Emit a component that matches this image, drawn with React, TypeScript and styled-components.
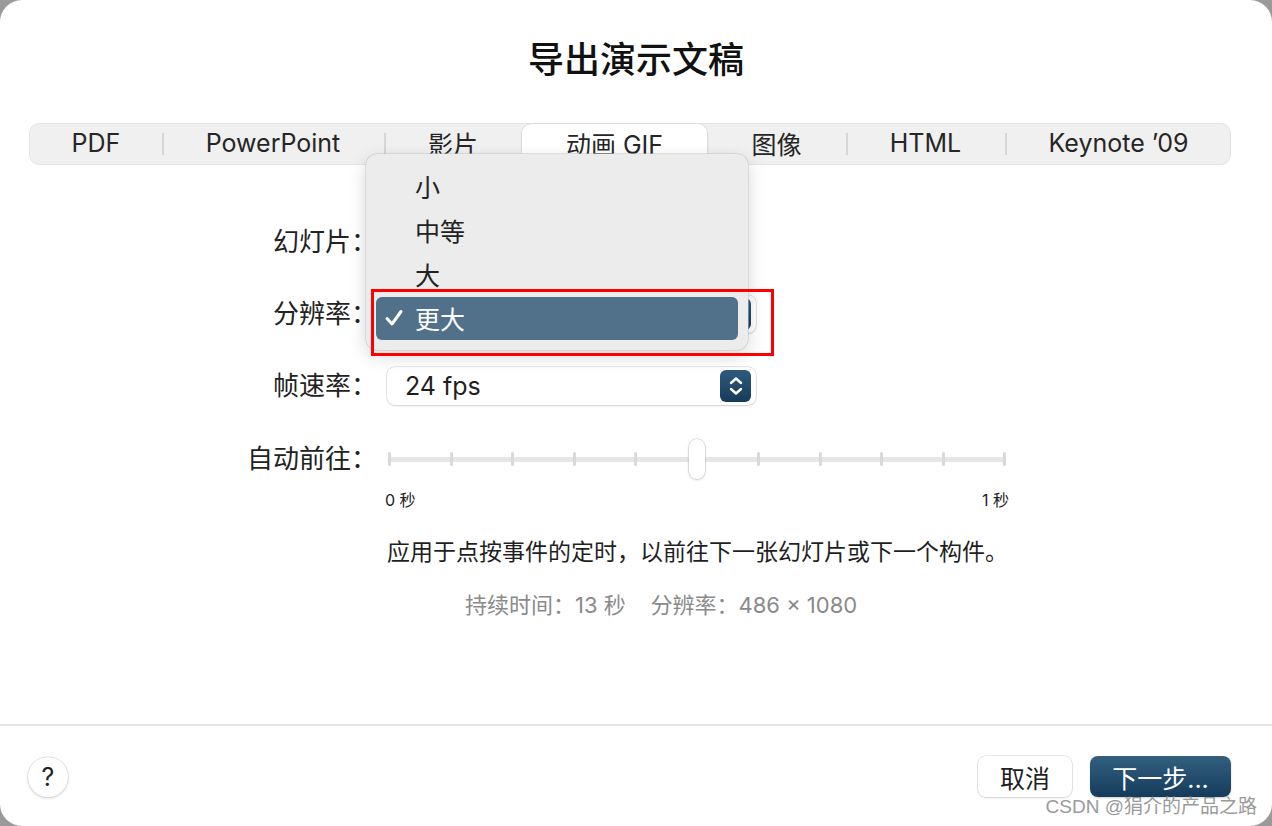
import React from "react";
import styled, { createGlobalStyle } from "styled-components";

const Global = createGlobalStyle`
  html, body { margin: 0; padding: 0; background: #9a9a9a; }
  body { font-family: "Inter", "Noto Sans CJK SC", sans-serif; color: #1f1f1f; }
  * { box-sizing: border-box; }
`;

const Dialog = styled.div`
  position: relative;
  width: 1272px;
  height: 826px;
  background: #ffffff;
  border-radius: 22px;
  display: flex;
  flex-direction: column;
  overflow: hidden;
  padding-top: 38px;
`;

const Title = styled.h1`
  margin: 0;
  font-size: 36px;
  line-height: 44px;
  font-weight: 500;
  text-align: center;
  color: #111;
`;

const Tabs = styled.div`
  margin: 41px 41px 0 29px;
  height: 42px;
  display: flex;
  align-items: stretch;
  background: #f0f0f0;
  border: 1px solid #e4e4e4;
  border-radius: 10px;
`;

const Tab = styled.div<{ $w: number; $active?: boolean; $divider?: boolean }>`
  position: relative;
  width: ${(p) => p.$w}px;
  flex: none;
  display: flex;
  align-items: center;
  justify-content: center;
  padding-bottom: 2px;
  font-size: 25px;
  color: #262626;
  border-radius: 9px;
  background: ${(p) => (p.$active ? "#ffffff" : "transparent")};
  box-shadow: ${(p) => (p.$active ? "0 0 0 0.5px #d6d6d6, 0 1px 3px rgba(0,0,0,0.12)" : "none")};
  &::before {
    content: "";
    display: ${(p) => (p.$divider ? "block" : "none")};
    position: absolute;
    left: 0;
    top: 9px;
    bottom: 9px;
    width: 1.5px;
    background: #d6d6d6;
  }
`;

const Form = styled.div`
  margin-top: 58px;
  display: grid;
  grid-template-columns: 377px auto;
  column-gap: 10px;
  row-gap: 34px;
  align-items: center;
`;

const Label = styled.div`
  text-align: right;
  font-size: 26px;
  line-height: 38px;
  color: #222;
`;

const Popup = styled.div`
  width: 369px;
  height: 38px;
  display: flex;
  align-items: center;
  justify-content: space-between;
  padding: 0 5px 0 18px;
  background: #fff;
  border-radius: 8px;
  box-shadow: 0 0 0 0.5px #cfcfcf, 0 1px 2px rgba(0,0,0,0.15);
  font-size: 25px;
`;

const Stepper = styled.div`
  width: 31px;
  height: 32px;
  border-radius: 6px;
  background: linear-gradient(#2f5b7f, #163b5a);
  display: flex;
  align-items: center;
  justify-content: center;
`;

const Placeholder = styled.div`
  height: 38px;
`;

const Slider = styled.div`
  position: relative;
  width: 622px;
  height: 40px;
  display: flex;
  align-items: center;
`;

const Track = styled.div`
  position: relative;
  margin-left: 1px;
  width: 618px;
  height: 14px;
  display: flex;
  align-items: center;
  justify-content: space-between;
  &::before {
    content: "";
    position: absolute;
    left: 0;
    right: 0;
    top: 5px;
    height: 5px;
    border-radius: 3px;
    background: #e6e6e6;
  }
`;

const Tick = styled.div`
  position: relative;
  width: 3px;
  height: 14px;
  border-radius: 2px;
  background: #d9d9d9;
`;

const Thumb = styled.div`
  position: absolute;
  left: 302px;
  top: 0;
  width: 16px;
  height: 40px;
  border-radius: 8px;
  background: #fff;
  box-shadow: 0 0 0 0.5px #c8c8c8, 0 1px 3px rgba(0,0,0,0.18);
`;

const Under = styled.div`
  grid-column: 2;
  margin-top: -23px;
  display: flex;
  flex-direction: column;
`;

const Scale = styled.div`
  width: 624px;
  display: flex;
  justify-content: space-between;
  font-size: 16px;
  line-height: 20px;
  color: #222;
  margin-left: -2px;
`;

const Desc = styled.div`
  margin-top: 27px;
  font-size: 23px;
  line-height: 30px;
  color: #1f1f1f;
`;

const Info = styled.div`
  margin-top: 23px;
  padding-left: 78px;
  font-size: 22px;
  line-height: 30px;
  color: #8a8a8a;
  white-space: pre;
`;

const Separator = styled.div`
  margin-top: auto;
  height: 2px;
  background: #e5e5e5;
`;

const Footer = styled.div`
  height: 100px;
  display: flex;
  align-items: flex-start;
  justify-content: space-between;
  padding: 30px 41px 0 28px;
`;

const Help = styled.div`
  width: 40px;
  height: 40px;
  border-radius: 50%;
  background: #fff;
  box-shadow: 0 0 0 0.5px #cfcfcf, 0 1px 3px rgba(0,0,0,0.2);
  display: flex;
  align-items: center;
  justify-content: center;
  font-size: 25px;
  color: #222;
  margin-top: 1px;
`;

const Buttons = styled.div`
  display: flex;
  gap: 18px;
`;

const Button = styled.div<{ $primary?: boolean; $w: number }>`
  width: ${(p) => p.$w}px;
  height: 41px;
  border-radius: 8px;
  display: flex;
  align-items: center;
  justify-content: center;
  font-size: 25px;
  color: ${(p) => (p.$primary ? "#fff" : "#1f1f1f")};
  background: ${(p) => (p.$primary ? "linear-gradient(#33607f, #153b5b)" : "#fff")};
  box-shadow: ${(p) =>
    p.$primary ? "0 1px 2px rgba(0,0,0,0.2)" : "0 0 0 0.5px #cfcfcf, 0 1px 2px rgba(0,0,0,0.15)"};
`;

const Menu = styled.div`
  position: absolute;
  left: 366px;
  top: 154px;
  width: 382px;
  height: 196px;
  padding: 11px 10px 10px;
  background: #ebeceb;
  border-radius: 11px;
  box-shadow: 0 0 0 0.5px #c4c4c4, 0 6px 18px rgba(0,0,0,0.16);
  display: flex;
  flex-direction: column;
`;

const MenuItem = styled.div<{ $selected?: boolean }>`
  height: ${(p) => (p.$selected ? 43 : 44)}px;
  display: flex;
  align-items: center;
  padding-left: 39px;
  padding-bottom: 2px;
  position: relative;
  font-size: 25px;
  color: ${(p) => (p.$selected ? "#fff" : "#222")};
  background: ${(p) => (p.$selected ? "#51718b" : "transparent")};
  border-radius: 6px;
`;

const Check = styled.svg`
  position: absolute;
  left: 8px;
  top: 11px;
`;

const Annotation = styled.div`
  position: absolute;
  left: 371px;
  top: 289px;
  width: 403px;
  height: 67px;
  border: 3px solid #ff0000;
`;

const Watermark = styled.div`
  position: absolute;
  right: 15px;
  bottom: 8px;
  font-size: 19px;
  color: #9a9a9a;
  font-family: "Liberation Sans", "Noto Sans CJK SC", sans-serif;
`;

const tabs = [
  { label: "PDF", w: 132 },
  { label: "PowerPoint", w: 222 },
  { label: "影片", w: 138 },
  { label: "动画 GIF", w: 185, active: true },
  { label: "图像", w: 139 },
  { label: "HTML", w: 159 },
  { label: "Keynote ’09", w: 227 },
];

const StepIcon = () => (
  <svg width="16" height="22" viewBox="0 0 16 22">
    <path d="M3 8 L8 3.5 L13 8" fill="none" stroke="#fff" strokeWidth="2.4" strokeLinecap="round" strokeLinejoin="round" />
    <path d="M3 14 L8 18.5 L13 14" fill="none" stroke="#fff" strokeWidth="2.4" strokeLinecap="round" strokeLinejoin="round" />
  </svg>
);

export default function App() {
  const ticks = Array.from({ length: 11 });
  return (
    <>
      <Global />
      <Dialog>
        <Title>导出演示文稿</Title>
        <Tabs>
          {tabs.map((t, i) => {
            const prev = tabs[i - 1];
            const divider = i > 0 && !t.active && !(prev && prev.active);
            return (
              <Tab key={t.label} $w={t.w} $active={t.active} $divider={divider}>
                {t.label}
              </Tab>
            );
          })}
        </Tabs>
        <Form>
          <Label>幻灯片：</Label>
          <Placeholder />
          <Label>分辨率：</Label>
          <Popup>
            <span />
            <Stepper>
              <StepIcon />
            </Stepper>
          </Popup>
          <Label>帧速率：</Label>
          <Popup>
            <span>24 fps</span>
            <Stepper>
              <StepIcon />
            </Stepper>
          </Popup>
          <Label>自动前往：</Label>
          <Slider>
            <Track>
              {ticks.map((_, i) => (
                <Tick key={i} />
              ))}
            </Track>
            <Thumb />
          </Slider>
          <Under>
            <Scale>
              <span>0 秒</span>
              <span>1 秒</span>
            </Scale>
            <Desc>应用于点按事件的定时，以前往下一张幻灯片或下一个构件。</Desc>
            <Info>{"持续时间：13 秒    分辨率：486 × 1080"}</Info>
          </Under>
        </Form>
        <Separator />
        <Footer>
          <Help>?</Help>
          <Buttons>
            <Button $w={94}>取消</Button>
            <Button $w={141} $primary>
              下一步...
            </Button>
          </Buttons>
        </Footer>
        <Menu>
          <MenuItem>小</MenuItem>
          <MenuItem>中等</MenuItem>
          <MenuItem>大</MenuItem>
          <MenuItem $selected>
            <Check width="20" height="20" viewBox="0 0 20 20">
              <path d="M3 10.5 L8 16 L17 3.5" fill="none" stroke="#fff" strokeWidth="3" strokeLinecap="round" strokeLinejoin="round" />
            </Check>
            更大
          </MenuItem>
        </Menu>
        <Annotation />
        <Watermark>CSDN @狷介的产品之路</Watermark>
      </Dialog>
    </>
  );
}
